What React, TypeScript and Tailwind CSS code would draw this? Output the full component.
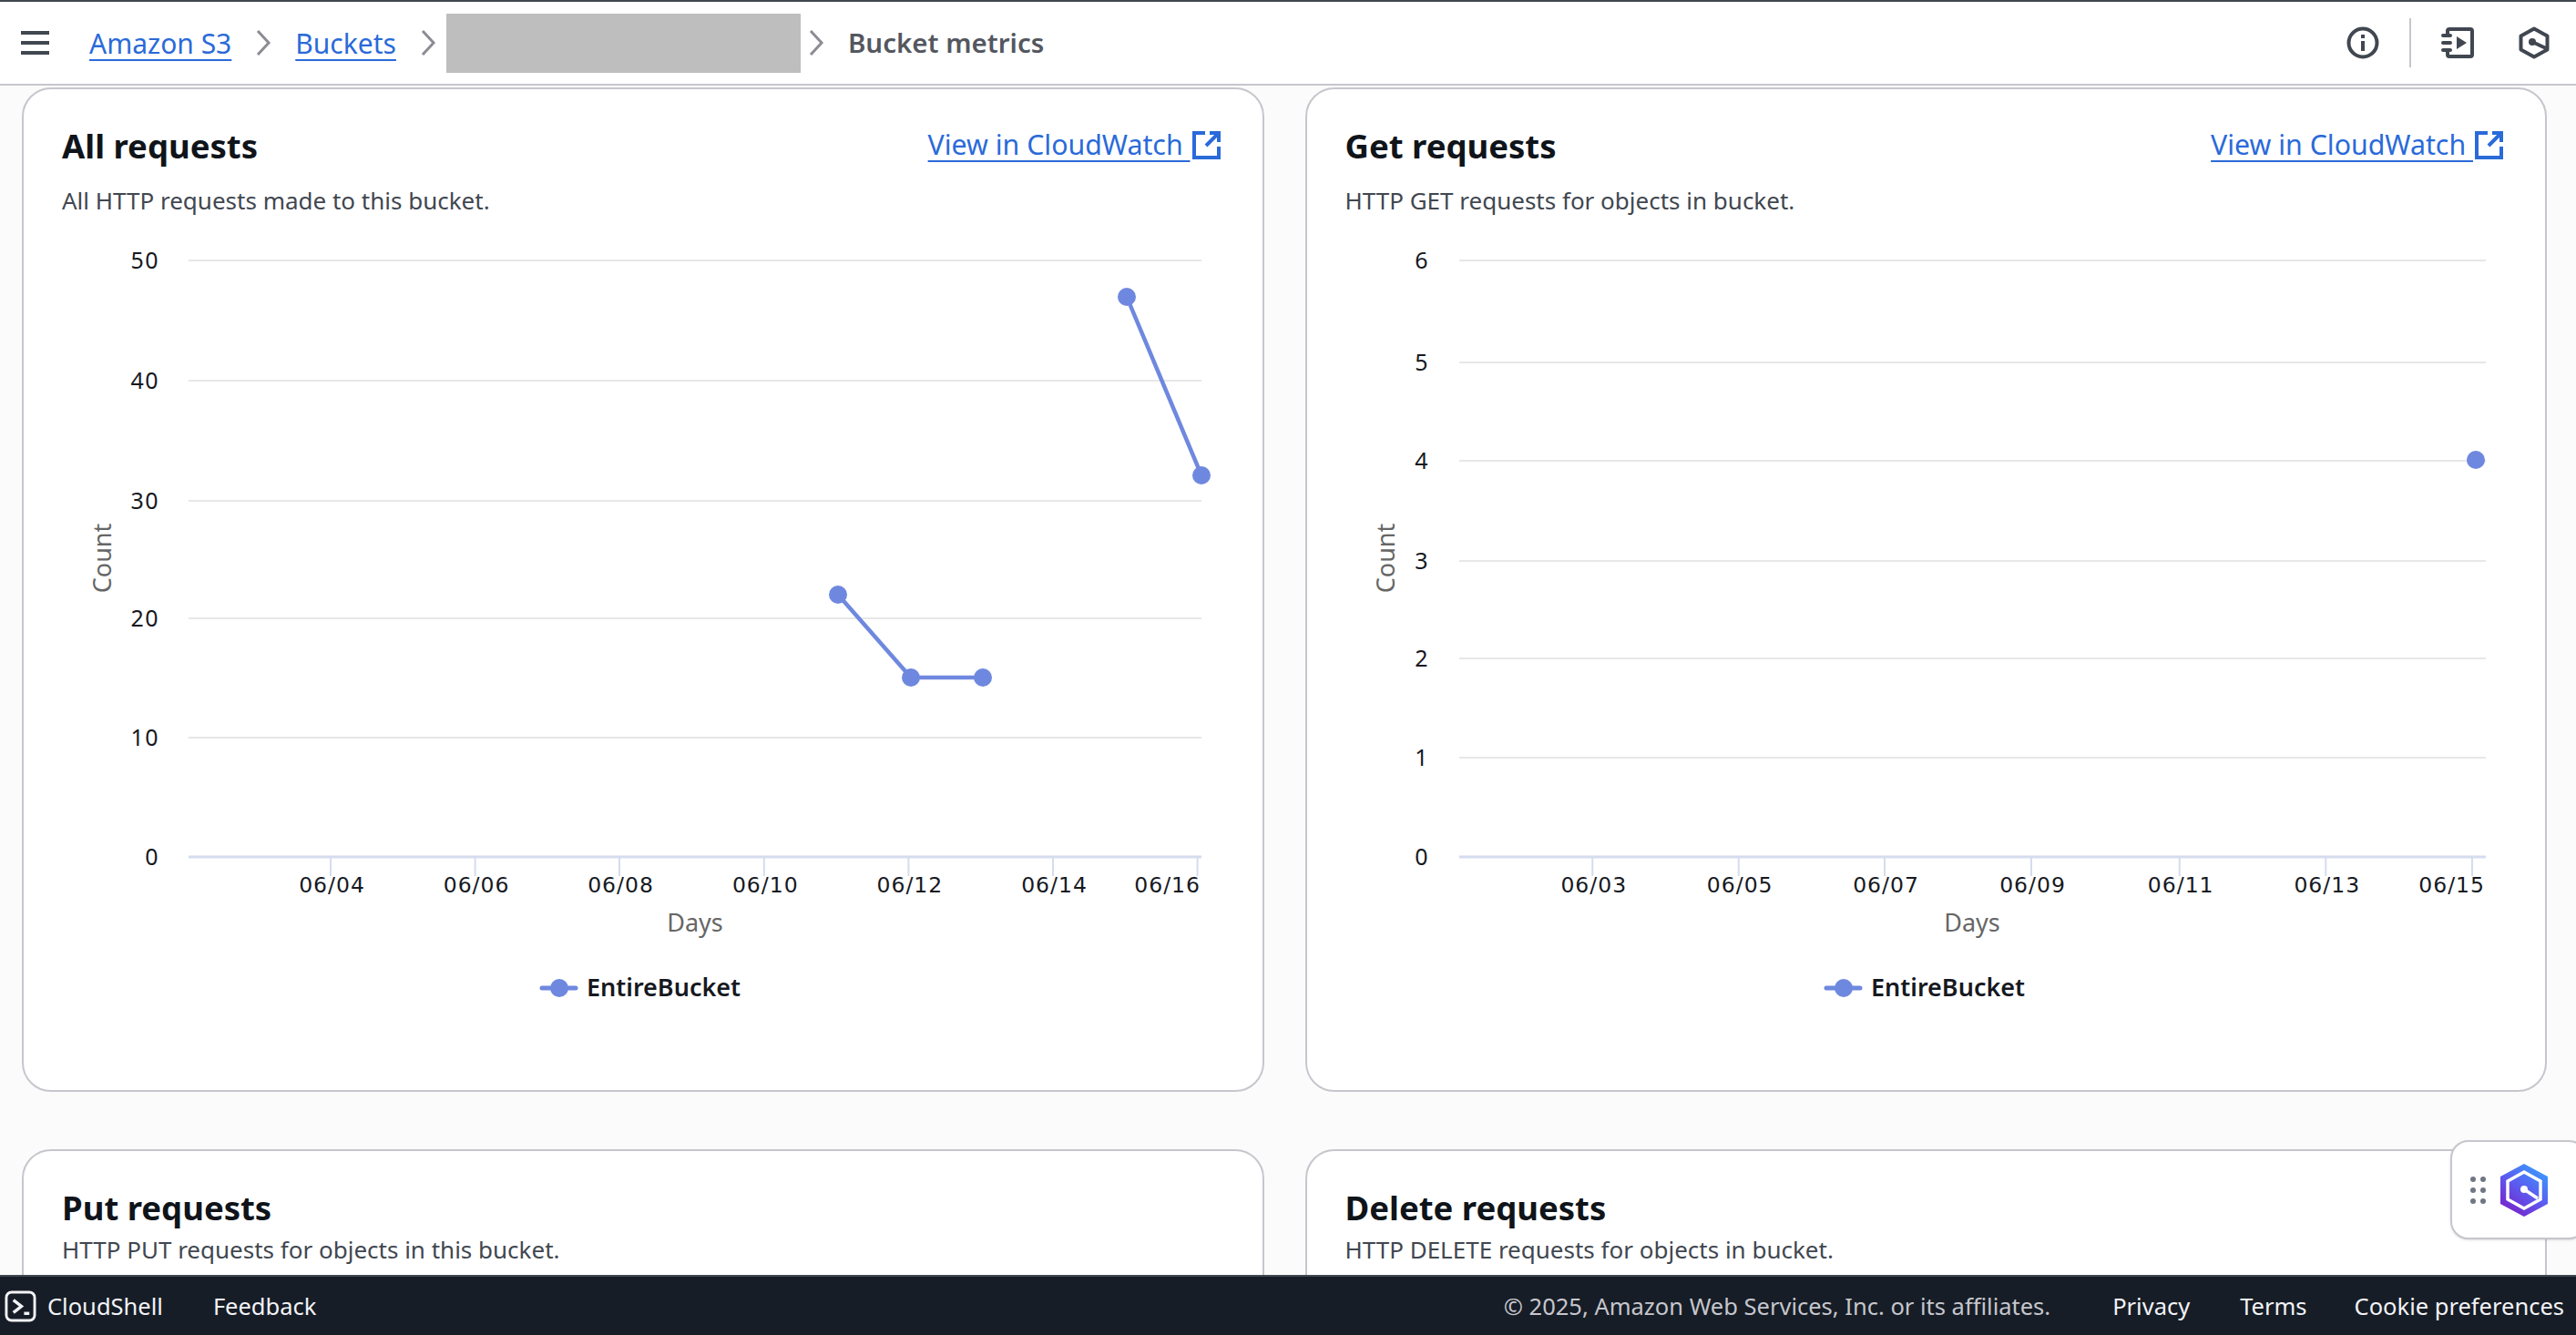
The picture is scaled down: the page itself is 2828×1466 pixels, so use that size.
const sans = "font-['Noto_Sans',sans-serif]";

const POINT = "#6f88df";

type Tick = { x: number; label: string; end?: boolean };

interface ChartProps {
  yLabels: { y: number; label: string }[];
  yLabelRight: number;
  gridFrom: number;
  gridTo: number;
  ticks: Tick[];
  segments: [number, number][][];
  countX: number;
  daysX: number;
  legendX: number;
}

// chart coordinates are relative to the inside of the card, y=0 is 270px down the page
function Chart({ yLabels, yLabelRight, gridFrom, gridTo, ticks, segments, countX, daysX, legendX }: ChartProps) {
  return (
    <svg viewBox="0 -20 1360 900" width={1360} height={900} className="block">
      {yLabels.map((t) => (
        <g key={t.label}>
          {t.label !== "0" && <line x1={gridFrom} x2={gridTo} y1={t.y} y2={t.y} stroke="#e7e7e7" strokeWidth={2} />}
          <text
            x={yLabelRight}
            y={t.y + 9}
            textAnchor="end"
            fontSize={25}
            letterSpacing={1.5}
            fill="#16191f"
            fontFamily="Noto Sans, sans-serif"
          >
            {t.label}
          </text>
        </g>
      ))}
      <line x1={gridFrom} x2={gridTo} y1={671} y2={671} stroke="#d5dcee" strokeWidth={3} />
      {ticks.map((t) => (
        <g key={t.label}>
          <line x1={t.x} x2={t.x} y1={671} y2={692} stroke="#d5dcee" strokeWidth={2} />
          <text
            x={t.end ? gridTo - 1 : t.x + 1.5}
            y={710}
            textAnchor={t.end ? "end" : "middle"}
            fontSize={23.5}
            letterSpacing={1}
            fill="#16191f"
            fontFamily="DejaVu Sans, sans-serif"
          >
            {t.label}
          </text>
        </g>
      ))}
      {segments.map((seg, i) => (
        <g key={i}>
          <polyline points={seg.map((p) => p.join(",")).join(" ")} fill="none" stroke={POINT} strokeWidth={4.5} />
          {seg.map((p, j) => (
            <circle key={j} cx={p[0]} cy={p[1]} r={10} fill={POINT} />
          ))}
        </g>
      ))}
      <text
        transform={`translate(${countX} 343) rotate(-90)`}
        textAnchor="middle"
        fontSize={27}
        fill="#666666"
        fontFamily="Noto Sans, sans-serif"
      >
        Count
      </text>
      <text x={daysX} y={753} textAnchor="middle" fontSize={27} fill="#666666" fontFamily="Noto Sans, sans-serif">
        Days
      </text>
      <line x1={legendX} x2={legendX + 37} y1={815} y2={815} stroke={POINT} strokeWidth={5} strokeLinecap="round" />
      <circle cx={legendX + 19} cy={815} r={10} fill={POINT} />
      <text x={legendX + 49} y={824} fontSize={27} fontWeight={600} fill="#16191f" fontFamily="Noto Sans, sans-serif">
        EntireBucket
      </text>
    </svg>
  );
}

function ExternalIcon() {
  return (
    <svg viewBox="0 0 31 31" className="w-[31px] h-[31px] shrink-0" fill="none" stroke="#2a6ad9" strokeWidth={4}>
      <path d="M14 2H2v27h27V17" />
      <path d="M19 2h10v10M28 3 15 16" />
    </svg>
  );
}

function Chevron({ className }: { className?: string }) {
  return (
    <svg viewBox="0 0 18 30" className={`w-[18px] h-[30px] shrink-0 ${className ?? ""}`} fill="none" stroke="#8c8c94" strokeWidth={3}>
      <path d="m3 2 12 13L3 28" />
    </svg>
  );
}

function Header() {
  return (
    <header className="h-[94px] shrink-0 bg-white border-t-2 border-b-2 border-t-[#414750] border-b-[#c6c6cd] flex items-center text-[30px]">
      <div className="ml-[23px] w-[31px] flex flex-col gap-[7px] shrink-0">
        <span className="h-[4px] bg-[#414750]" />
        <span className="h-[4px] bg-[#414750]" />
        <span className="h-[4px] bg-[#414750]" />
      </div>
      <a className="ml-[44px] text-[#2a6ad9] underline underline-offset-[6px] decoration-2">Amazon S3</a>
      <Chevron className="ml-[26px]" />
      <a className="ml-[26px] text-[#2a6ad9] underline underline-offset-[6px] decoration-2">Buckets</a>
      <Chevron className="ml-[26px]" />
      <div className="ml-[11px] w-[389px] h-[65px] bg-[#bebebe]" />
      <Chevron className="ml-[8px]" />
      <span className="ml-[26px] text-[29.5px] font-semibold text-[#54575f]">Bucket metrics</span>
      <div className="ml-auto flex items-center">
        <svg viewBox="0 0 36 36" className="w-[36px] h-[36px]" fill="none" stroke="#414750" strokeWidth={4}>
          <circle cx="18" cy="18" r="15.5" />
          <path d="M18 16v11" />
          <path d="M18 9v4" />
        </svg>
        <span className="ml-[33px] w-[2px] h-[54px] bg-[#c6c6cd]" />
        <svg viewBox="0 0 36 36" className="ml-[33px] w-[36px] h-[36px]" fill="none" stroke="#414750" strokeWidth={4}>
          <path d="M7 8V5a2 2 0 0 1 2-2h23a2 2 0 0 1 2 2v26a2 2 0 0 1-2 2H9a2 2 0 0 1-2-2v-3" />
          <path d="M2 10h8M2 18h8M2 26h8" strokeLinecap="round" />
          <path d="M17 11v14l11-7z" fill="#414750" stroke="none" />
        </svg>
        <svg viewBox="0 0 34 36" className="ml-[49px] mr-[29px] w-[34px] h-[36px]" fill="none" stroke="#414750" strokeWidth={4}>
          <path d="m17 2.5 14.5 8v15L17 33.5l-14.500-8v-15z" strokeLinejoin="round" />
          <circle cx="15" cy="17" r="4" fill="#414750" stroke="none" />
          <path d="m15 17 15 7" />
        </svg>
      </div>
    </header>
  );
}

interface CardProps {
  title: string;
  description: string;
  link?: boolean;
  tall?: boolean;
  children?: React.ReactNode;
}

function Card({ title, description, link, tall, children }: CardProps) {
  return (
    <section className={`bg-white border-2 border-[#c6c6cd] rounded-[32px] ${tall ? "h-[1103px]" : "h-[400px]"}`}>
      <div className="pl-[42px] pr-[46px] pt-[40px]">
        <div className="flex items-center justify-between h-[44px]">
          <h2 className="text-[36.5px] leading-[44px] font-bold text-[#0f141a]">{title}</h2>
          {link && (
            <a className="flex items-center gap-[2px] text-[30.3px] text-[#2a6ad9] h-[40px] -mt-[2px]">
              <span className="underline underline-offset-[6px] decoration-2">View in CloudWatch&nbsp;</span>
              <ExternalIcon />
            </a>
          )}
        </div>
        <p className={`${tall ? "mt-[21px]" : "mt-[7px]"} text-[26px] leading-[34px] text-[#414750]`}>{description}</p>
      </div>
      {children && <div className="mt-[13px]">{children}</div>}
    </section>
  );
}

function Footer() {
  return (
    <footer className="h-[66px] shrink-0 bg-[#161d26] border-t-2 border-[#414750] flex items-center text-[25.5px] text-[#f3f3f7]">
      <svg viewBox="0 0 36 36" className="ml-[5px] w-[35px] h-[35px]" fill="none" stroke="#f3f3f7" strokeWidth={3}>
        <rect x="2" y="2" width="32" height="32" rx="6" />
        <path d="m10 11 9 7-9 7" strokeWidth={3.500} />
        <path d="M22 26h6" strokeWidth={3.500} />
      </svg>
      <span className="ml-[12px]">CloudShell</span>
      <span className="ml-[55px]">Feedback</span>
      <span className="ml-auto text-[#c6c6cd]">© 2025, Amazon Web Services, Inc. or its affiliates.</span>
      <span className="ml-[68px]">Privacy</span>
      <span className="ml-[55px]">Terms</span>
      <span className="ml-[52px] mr-[13px]">Cookie preferences</span>
    </footer>
  );
}

function AssistantWidget() {
  return (
    <div className="absolute left-[2690px] top-[1252px] w-[150px] h-[109px] bg-white border-2 border-[#c6c6cd] rounded-[20px] shadow-sm flex items-center pl-[20px] gap-[15px]">
      <div className="grid grid-cols-2 gap-x-[5px] gap-y-[6px]">
        {[0, 1, 2, 3, 4, 5].map((i) => (
          <span key={i} className="w-[6px] h-[6px] rounded-full bg-[#707784]" />
        ))}
      </div>
      <svg viewBox="0 0 54 60" className="w-[54px] h-[60px]">
        <defs>
          <linearGradient id="hexFill" x1="0.85" y1="0" x2="0.2" y2="1">
            <stop offset="0" stopColor="#38a0ff" />
            <stop offset="0.5" stopColor="#5b5cf0" />
            <stop offset="1" stopColor="#7a1fc8" />
          </linearGradient>
        </defs>
        <path d="M27 1 53 15v30L27 59 1 45V15z" fill="url(#hexFill)" strokeLinejoin="round" />
        <path d="M27 10 45 20v20L27 50 9 40V20z" fill="none" stroke="#fff" strokeWidth={3.500} />
        <circle cx="27" cy="29" r="4" fill="#fff" />
        <path d="m27 29 15 10" stroke="#fff" strokeWidth={3.500} />
      </svg>
    </div>
  );
}

const allRequests = {
  yLabels: [
    { y: 16, label: "50" },
    { y: 148, label: "40" },
    { y: 280, label: "30" },
    { y: 409, label: "20" },
    { y: 540, label: "10" },
    { y: 671, label: "0" },
  ],
  yLabelRight: 149,
  gridFrom: 181,
  gridTo: 1293,
  ticks: [
    { x: 337, label: "06/04" },
    { x: 495.6, label: "06/06" },
    { x: 654, label: "06/08" },
    { x: 812.8, label: "06/10" },
    { x: 971.4, label: "06/12" },
    { x: 1130, label: "06/14" },
    { x: 1288.6, label: "06/16", end: true },
  ],
  segments: [
    [
      [894, 383],
      [974, 474],
      [1053, 474],
    ],
    [
      [1211, 56],
      [1293, 252],
    ],
  ] as [number, number][][],
  countX: 96,
  daysX: 737,
  legendX: 569,
};

const getRequests = {
  yLabels: [
    { y: 16, label: "6" },
    { y: 128, label: "5" },
    { y: 236, label: "4" },
    { y: 346, label: "3" },
    { y: 453, label: "2" },
    { y: 562, label: "1" },
    { y: 671, label: "0" },
  ],
  yLabelRight: 134,
  gridFrom: 167,
  gridTo: 1294,
  ticks: [
    { x: 313.3, label: "06/03" },
    { x: 473.7, label: "06/05" },
    { x: 634, label: "06/07" },
    { x: 795, label: "06/09" },
    { x: 957.7, label: "06/11" },
    { x: 1118.3, label: "06/13" },
    { x: 1279, label: "06/15", end: true },
  ],
  segments: [[[1283, 235]]] as [number, number][][],
  countX: 96,
  daysX: 730,
  legendX: 570,
};

export default function App() {
  return (
    <div className={`relative h-[1466px] overflow-hidden flex flex-col bg-[#fbfbfb] ${sans}`}>
      <Header />
      <main className="flex-1 min-h-0 overflow-hidden pt-[2px] pl-[24px] pr-[32px]">
        <div className="grid grid-cols-2 gap-x-[45px] gap-y-[63px]">
          <Card title="All requests" description="All HTTP requests made to this bucket." link tall>
            <Chart {...allRequests} />
          </Card>
          <Card title="Get requests" description="HTTP GET requests for objects in bucket." link tall>
            <Chart {...getRequests} />
          </Card>
          <Card title="Put requests" description="HTTP PUT requests for objects in this bucket." />
          <Card title="Delete requests" description="HTTP DELETE requests for objects in bucket." />
        </div>
      </main>
      <Footer />
      <AssistantWidget />
    </div>
  );
}
